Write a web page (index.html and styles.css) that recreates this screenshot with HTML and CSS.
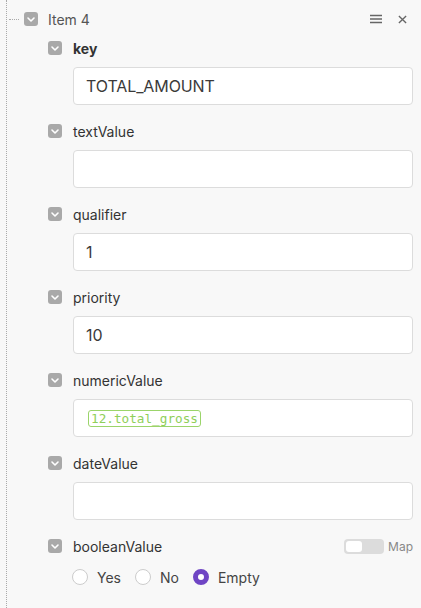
FILE: index.html
```html
<!DOCTYPE html>
<html>
<head>
<meta charset="utf-8">
<link rel="stylesheet" href="styles.css">
</head>
<body>
<div class="tree">
  <div class="item-head">
    <span class="connector"></span>
    <span class="cb"><svg viewBox="0 0 14 14"><path d="M4 6 L7 9 L10 6" fill="none" stroke="#fff" stroke-width="1.6" stroke-linecap="round" stroke-linejoin="round"/></svg></span>
    <span class="item-title">Item 4</span>
    <span class="head-actions">
      <svg class="menu" viewBox="0 0 12 12"><path d="M0 2.5 H12 M0 6 H12 M0 9.5 H12" stroke="#666" stroke-width="1.5"/></svg>
      <svg class="close" viewBox="0 0 10 10"><path d="M1 1 L9 9 M9 1 L1 9" stroke="#666" stroke-width="1.5"/></svg>
    </span>
  </div>
  <div class="fields">
    <div class="field">
      <div class="label-row"><span class="cb"><svg viewBox="0 0 14 14"><path d="M4 6 L7 9 L10 6" fill="none" stroke="#fff" stroke-width="1.6" stroke-linecap="round" stroke-linejoin="round"/></svg></span><span class="label bold">key</span></div>
      <div class="input">TOTAL_AMOUNT</div>
    </div>
    <div class="field">
      <div class="label-row"><span class="cb"><svg viewBox="0 0 14 14"><path d="M4 6 L7 9 L10 6" fill="none" stroke="#fff" stroke-width="1.6" stroke-linecap="round" stroke-linejoin="round"/></svg></span><span class="label">textValue</span></div>
      <div class="input"></div>
    </div>
    <div class="field">
      <div class="label-row"><span class="cb"><svg viewBox="0 0 14 14"><path d="M4 6 L7 9 L10 6" fill="none" stroke="#fff" stroke-width="1.6" stroke-linecap="round" stroke-linejoin="round"/></svg></span><span class="label">qualifier</span></div>
      <div class="input">1</div>
    </div>
    <div class="field">
      <div class="label-row"><span class="cb"><svg viewBox="0 0 14 14"><path d="M4 6 L7 9 L10 6" fill="none" stroke="#fff" stroke-width="1.6" stroke-linecap="round" stroke-linejoin="round"/></svg></span><span class="label">priority</span></div>
      <div class="input">10</div>
    </div>
    <div class="field">
      <div class="label-row"><span class="cb"><svg viewBox="0 0 14 14"><path d="M4 6 L7 9 L10 6" fill="none" stroke="#fff" stroke-width="1.6" stroke-linecap="round" stroke-linejoin="round"/></svg></span><span class="label">numericValue</span></div>
      <div class="input"><span class="tag">12.total_gross</span></div>
    </div>
    <div class="field">
      <div class="label-row"><span class="cb"><svg viewBox="0 0 14 14"><path d="M4 6 L7 9 L10 6" fill="none" stroke="#fff" stroke-width="1.6" stroke-linecap="round" stroke-linejoin="round"/></svg></span><span class="label">dateValue</span></div>
      <div class="input"></div>
    </div>
    <div class="field">
      <div class="label-row"><span class="cb"><svg viewBox="0 0 14 14"><path d="M4 6 L7 9 L10 6" fill="none" stroke="#fff" stroke-width="1.6" stroke-linecap="round" stroke-linejoin="round"/></svg></span><span class="label">booleanValue</span>
        <span class="map"><span class="toggle"><span class="knob"></span></span><span class="map-text">Map</span></span>
      </div>
      <div class="radios">
        <span class="radio"><span class="circle"></span>Yes</span>
        <span class="radio"><span class="circle"></span>No</span>
        <span class="radio"><span class="circle on"></span>Empty</span>
      </div>
    </div>
  </div>
</div>
</body>
</html>
```

FILE: styles.css
```css
html, body {
  margin: 0;
  padding: 0;
  background: #f8f8f8;
  height: 100%;
}
body {
  font-family: Inter, "Noto Sans", sans-serif;
  color: #333;
  width: 421px;
  height: 608px;
  overflow: hidden;
}
.tree {
  margin-left: 6px;
  border-left: 1px dotted #aaa;
  height: 608px;
  box-sizing: border-box;
}
.item-head {
  display: flex;
  align-items: center;
  height: 38px;
}
.connector {
  width: 10px;
  border-top: 1px dotted #aaa;
  margin-left: 2px;
  margin-right: 5px;
}
.cb {
  width: 14px;
  height: 14px;
  border-radius: 3px;
  background: #a9a9a9;
  display: inline-flex;
  flex-shrink: 0;
}
.cb svg {
  width: 14px;
  height: 14px;
}
.item-title {
  margin-left: 10px;
  font-size: 14px;
  color: #555;
}
.head-actions {
  margin-left: auto;
  display: flex;
  align-items: center;
  gap: 16px;
  margin-right: 14px;
}
.menu { width: 12px; height: 12px; }
.close { width: 9px; height: 9px; }
.fields {
  padding-left: 41px;
  padding-right: 8px;
}
.field {
  margin-bottom: 16px;
}
.label-row {
  display: flex;
  align-items: center;
  height: 20px;
  margin-bottom: 9px;
}
.label {
  margin-left: 11px;
  font-size: 14px;
  color: #333;
}
.label.bold { font-weight: 700; }
.input {
  margin-left: 25px;
  height: 38px;
  box-sizing: border-box;
  border: 1px solid #dcdcdc;
  border-radius: 4px;
  background: #fff;
  display: flex;
  align-items: center;
  padding-left: 12px;
  font-size: 16px;
  color: #3a3a3a;
  letter-spacing: -0.1px;
}
.tag {
  font-family: "DejaVu Sans Mono", monospace;
  font-size: 12.7px;
  color: #8fcf5a;
  border: 1px solid #9bd46a;
  border-radius: 3px;
  padding: 0 2px;
  line-height: 15px;
  margin-left: 2px;
  letter-spacing: 0;
}
.map {
  margin-left: auto;
  display: flex;
  align-items: center;
  gap: 4px;
}
.toggle {
  width: 40px;
  height: 15px;
  border-radius: 4px;
  background: #dcdcdc;
  display: flex;
  align-items: center;
  padding-left: 2px;
  box-sizing: border-box;
}
.knob {
  width: 16px;
  height: 11px;
  background: #fff;
  border-radius: 3px;
}
.map-text {
  font-size: 12px;
  color: #888;
}
.radios {
  margin-left: 24px;
  display: flex;
  align-items: center;
  height: 24px;
  gap: 14px;
}
.radio {
  display: flex;
  align-items: center;
  gap: 9px;
  font-size: 14px;
  color: #444;
}
.circle {
  width: 16px;
  height: 16px;
  box-sizing: border-box;
  border: 1px solid #ccc;
  border-radius: 50%;
  background: #fff;
}
.circle.on {
  border: 5px solid #6f45c4;
}
```
